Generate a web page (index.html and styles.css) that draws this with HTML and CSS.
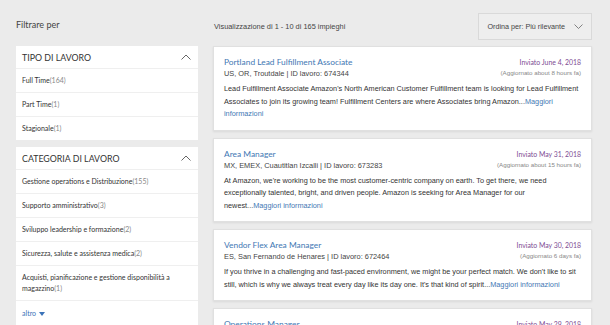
FILE: index.html
```html
<!DOCTYPE html>
<html lang="it">
<head>
  <meta charset="UTF-8">
  <meta name="viewport" content="width=device-width, initial-scale=1.0">
  <title>Lavori</title>
  <link rel="stylesheet" href="styles.css">
</head>
<body>
  <div class="page">
    <aside class="filters">
      <h2 class="filters-title">Filtrare per</h2>
      <section class="facet">
        <div class="facet-head">
          <span>TIPO DI LAVORO</span>
          <svg class="chev" width="10" height="6" viewBox="0 0 10 6"><path d="M0.5 5.5 L5 1 L9.5 5.5" fill="none" stroke="#555" stroke-width="0.9"/></svg>
        </div>
        <div class="facet-row">Full Time<span class="count">(164)</span></div>
        <div class="facet-row">Part Time<span class="count">(1)</span></div>
        <div class="facet-row">Stagionale<span class="count">(1)</span></div>
      </section>
      <section class="facet">
        <div class="facet-head">
          <span>CATEGORIA DI LAVORO</span>
          <svg class="chev" width="10" height="6" viewBox="0 0 10 6"><path d="M0.5 5.5 L5 1 L9.5 5.5" fill="none" stroke="#555" stroke-width="0.9"/></svg>
        </div>
        <div class="facet-row">Gestione operations e Distribuzione<span class="count">(155)</span></div>
        <div class="facet-row">Supporto amministrativo<span class="count">(3)</span></div>
        <div class="facet-row">Sviluppo leadership e formazione<span class="count">(2)</span></div>
        <div class="facet-row">Sicurezza, salute e assistenza medica<span class="count">(2)</span></div>
        <div class="facet-row">Acquisti, pianificazione e gestione disponibilità a magazzino<span class="count">(1)</span></div>
        <div class="facet-row more">altro <svg class="caret" width="6" height="4" viewBox="0 0 6 4"><path d="M0 0 H6 L3 4 Z" fill="#3b73b9"/></svg></div>
      </section>
    </aside>

    <main class="results">
      <div class="results-bar">
        <span class="results-count">Visualizzazione di 1 - 10 di 165 impieghi</span>
        <div class="sort">
          <span>Ordina per: Più rilevante</span>
          <svg width="9" height="5" viewBox="0 0 9 5"><path d="M0.5 0.5 L4.5 4.5 L8.5 0.5" fill="none" stroke="#666" stroke-width="0.8"/></svg>
        </div>
      </div>

      <article class="job">
        <div class="job-head">
          <div>
            <a class="job-title" href="#">Portland Lead Fulfillment Associate</a>
            <div class="job-loc">US, OR, Troutdale | ID lavoro: 674344</div>
          </div>
          <div class="job-dates">
            <div class="posted">Inviato June 4, 2018</div>
            <div class="updated">(Aggiornato about 8 hours fa)</div>
          </div>
        </div>
        <p class="job-desc">Lead Fulfillment Associate Amazon's North American Customer Fulfillment team is looking for Lead Fulfillment Associates to join its growing team! Fulfillment Centers are where Associates bring Amazon...<a href="#">Maggiori informazioni</a></p>
      </article>

      <article class="job">
        <div class="job-head">
          <div>
            <a class="job-title" href="#">Area Manager</a>
            <div class="job-loc">MX, EMEX, Cuautitlan Izcalli | ID lavoro: 673283</div>
          </div>
          <div class="job-dates">
            <div class="posted">Inviato May 31, 2018</div>
            <div class="updated">(Aggiornato about 15 hours fa)</div>
          </div>
        </div>
        <p class="job-desc">At Amazon, we're working to be the most customer-centric company on earth. To get there, we need exceptionally talented, bright, and driven people. Amazon is seeking for Area Manager for our newest...<a href="#">Maggiori informazioni</a></p>
      </article>

      <article class="job">
        <div class="job-head">
          <div>
            <a class="job-title" href="#">Vendor Flex Area Manager</a>
            <div class="job-loc">ES, San Fernando de Henares | ID lavoro: 672464</div>
          </div>
          <div class="job-dates">
            <div class="posted">Inviato May 30, 2018</div>
            <div class="updated">(Aggiornato 6 days fa)</div>
          </div>
        </div>
        <p class="job-desc">If you thrive in a challenging and fast-paced environment, we might be your perfect match. We don't like to sit still, which is why we always treat every day like its day one. It's that kind of spirit...<a href="#">Maggiori informazioni</a></p>
      </article>

      <article class="job">
        <div class="job-head">
          <div>
            <a class="job-title" href="#">Operations Manager</a>
            <div class="job-loc">US, WA, Seattle | ID lavoro: 671980</div>
          </div>
          <div class="job-dates">
            <div class="posted">Inviato May 29, 2018</div>
            <div class="updated">(Aggiornato 7 days fa)</div>
          </div>
        </div>
      </article>
    </main>
  </div>
</body>
</html>
```

FILE: styles.css
```css
body {
  margin: 0;
  background-color: #ebebeb;
  font-family: "Liberation Sans", Arial, sans-serif;
  color: #333;
  overflow: hidden;
}
.page {
  display: flex;
  align-items: flex-start;
  gap: 15px;
  padding: 0 18px 0 16px;
}
.filters {
  width: 182px;
  flex-shrink: 0;
  font-family: Lato, "Open Sans", sans-serif;
}
.filters-title {
  margin: 0;
  height: 46px;
  line-height: 50px;
  font-size: 9px;
  font-weight: normal;
  color: #444;
}
.facet {
  background-color: #fff;
  margin-bottom: 7px;
}
.facet-head {
  display: flex;
  justify-content: space-between;
  align-items: center;
  height: 22px;
  padding: 0 6px;
  font-size: 8.8px;
  color: #333;
}
.chev {
  margin-top: -1px;
  margin-right: 1px;
}
.facet-row {
  border-top: 1px solid #efefef;
  padding: 6px 6px;
  font-size: 7px;
  line-height: 11px;
  color: #333;
}
.count {
  color: #888;
}
.more {
  color: #3b73b9;
  padding: 7px 6px 6px;
}
.caret {
  margin-left: 1px;
}
.results {
  flex: 1;
  min-width: 0;
}
.results-bar {
  display: flex;
  justify-content: space-between;
  align-items: center;
  height: 27px;
  padding-top: 13px;
  margin-bottom: 6px;
}
.results-count {
  font-size: 7.4px;
  padding-left: 1px;
  color: #444;
}
.sort {
  display: flex;
  align-items: center;
  gap: 9px;
  height: 25px;
  padding: 0 8px;
  border: 1px solid #d9d9d9;
  background-color: #eeeeee;
  font-size: 7.2px;
  color: #444;
}
.job {
  background-color: #fff;
  border: 1px solid #e0e0e0;
  box-shadow: 0 1px 2px rgba(0,0,0,0.08);
  padding: 10px 9px 9px 10px;
  margin-bottom: 7px;
}
.job-head {
  display: flex;
  justify-content: space-between;
  align-items: flex-start;
  padding-right: 1px;
}
.job-title {
  display: block;
  font-family: Lato, "Open Sans", sans-serif;
  font-size: 8.4px;
  line-height: 11px;
  color: #3f78b4;
  text-decoration: none;
}
.job-loc {
  font-size: 7.4px;
  line-height: 11px;
  color: #444;
}
.job-dates {
  text-align: right;
}
.posted {
  font-family: Lato, "Open Sans", sans-serif;
  font-size: 6.9px;
  line-height: 11px;
  color: #7e4c93;
}
.updated {
  font-size: 6.2px;
  line-height: 9px;
  color: #888;
}
.job-desc {
  margin: 4px 0 0;
  font-size: 7.3px;
  line-height: 12.5px;
  color: #333;
}
.job-desc a {
  color: #3f78b4;
  text-decoration: none;
}
```
